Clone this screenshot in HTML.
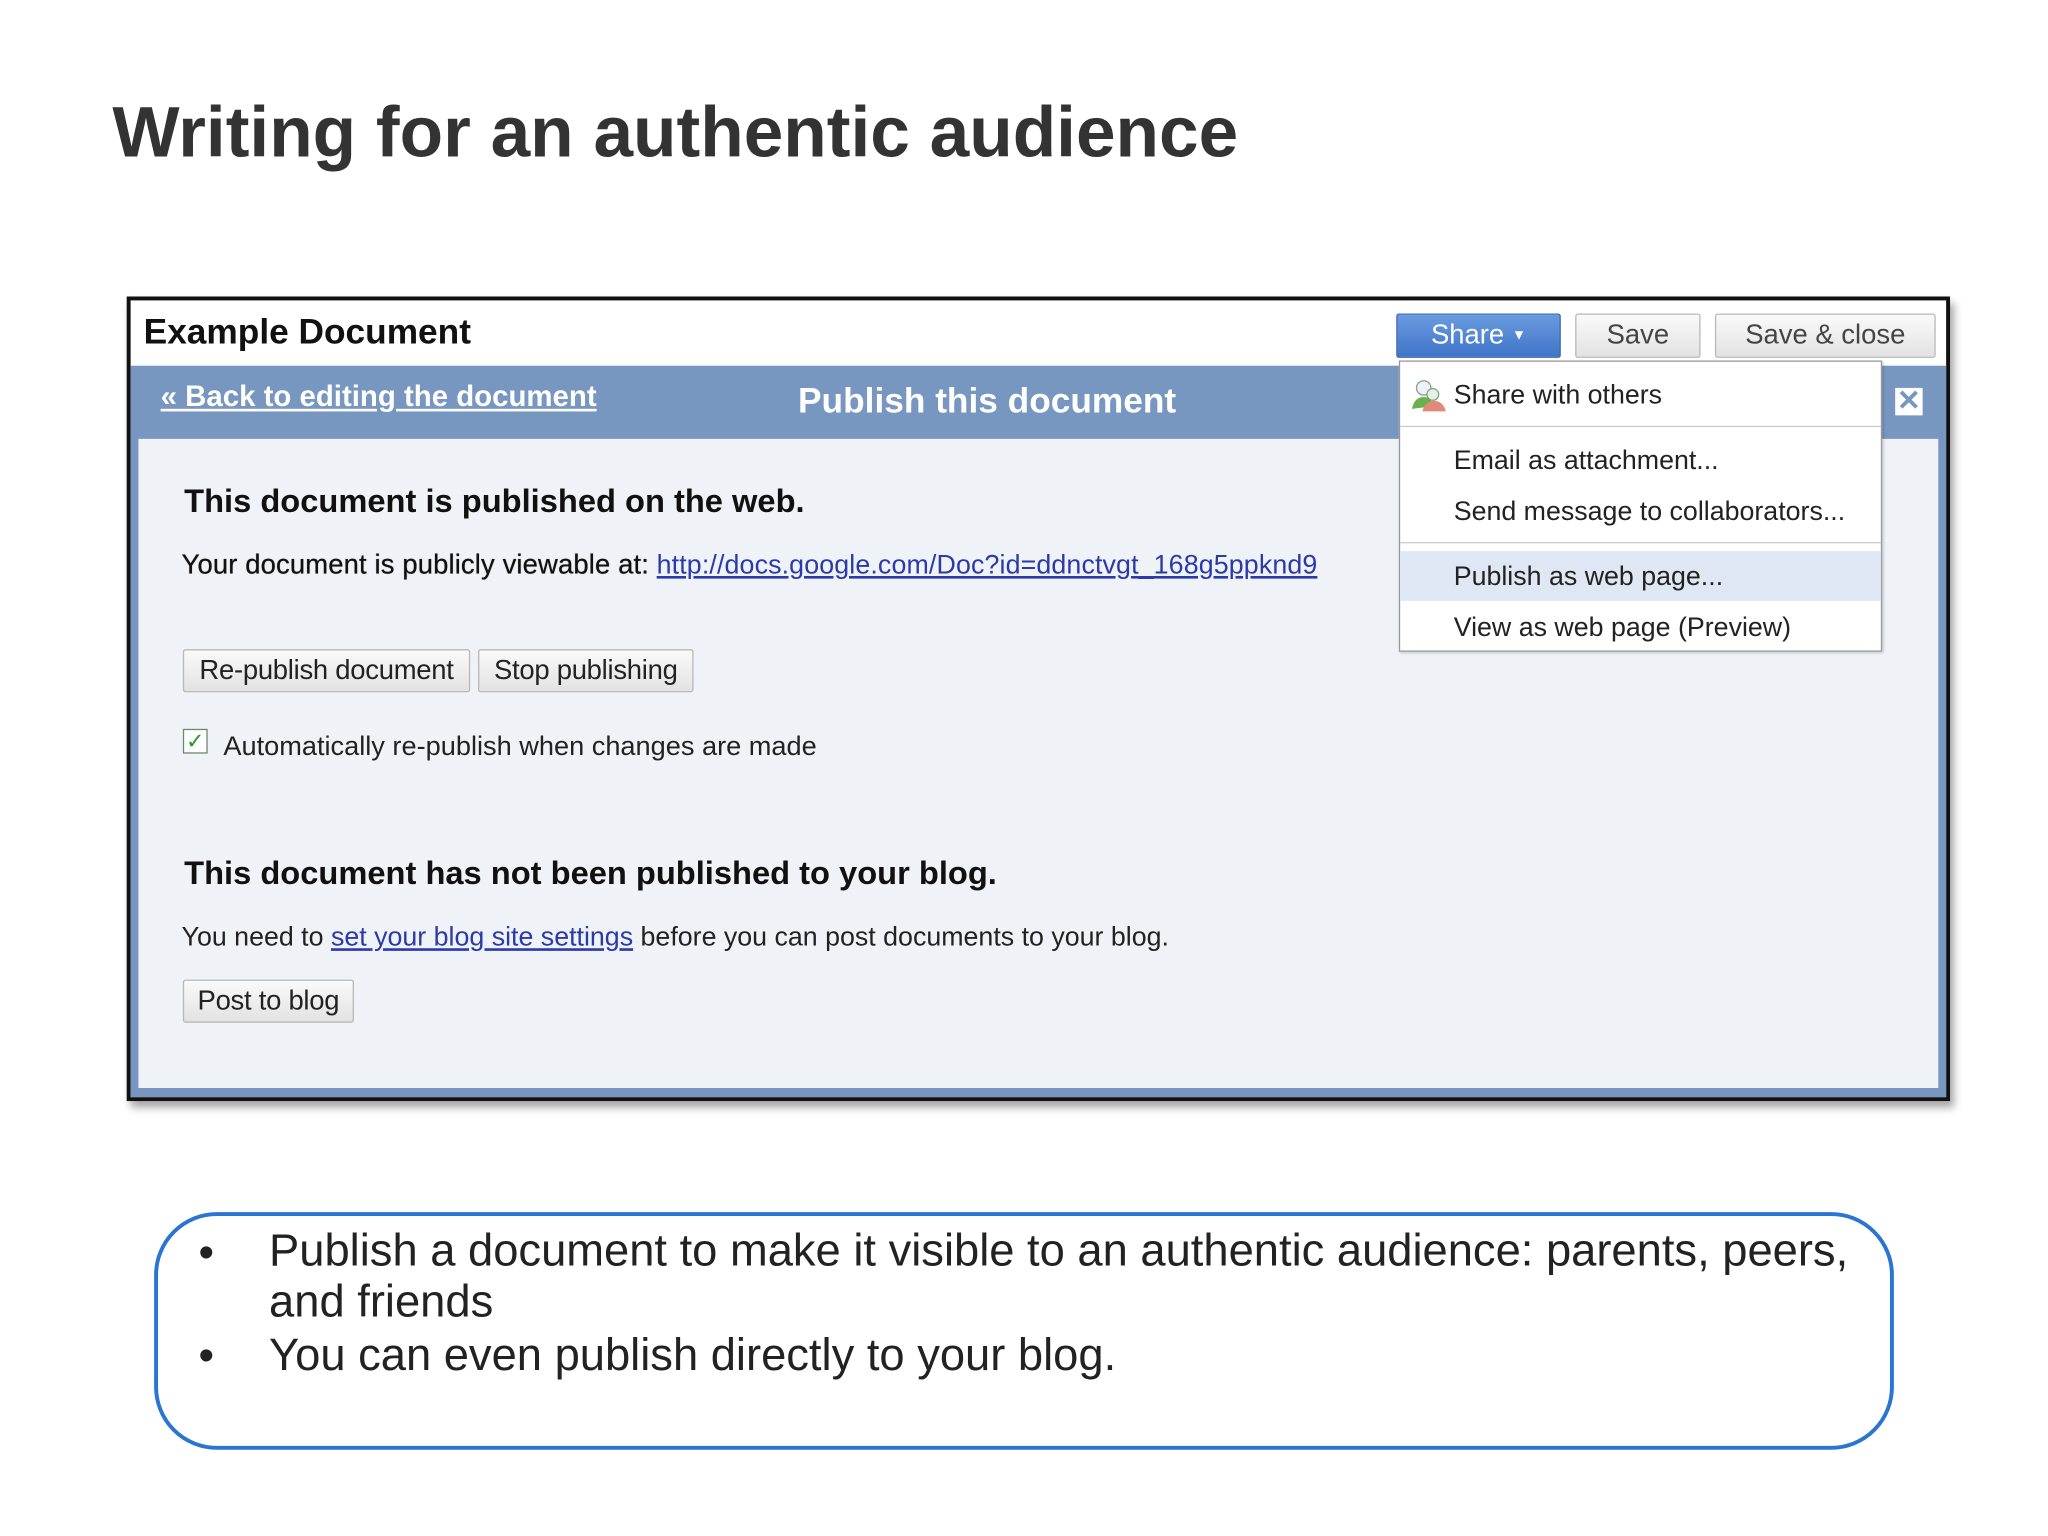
<!DOCTYPE html>
<html><head><meta charset="utf-8"><style>
html,body{margin:0;padding:0;background:#fff;width:2048px;height:1536px;overflow:hidden}
#s{position:absolute;left:0;top:0;width:1568px;height:1176px;transform:scale(1.306122);transform-origin:0 0;font-family:"Liberation Sans",Arial,sans-serif}
.a{position:absolute;white-space:nowrap}
.btn{position:absolute;border:1px solid #b8b8b8;background:linear-gradient(#fafafa,#e2e2e2);color:#222;font-size:21px;text-align:center;box-sizing:border-box;letter-spacing:-0.2px;border-radius:2px;white-space:nowrap}
.mi{position:absolute;left:41px;font-size:20.5px;color:#222;white-space:nowrap}
</style></head><body><div id="s">
<div class="a" style="left:86px;top:70px;font-size:54.5px;font-weight:bold;color:#333">Writing for an authentic audience</div>

<div style="position:absolute;left:97px;top:227px;width:1396px;height:616px;box-sizing:border-box;border:3px solid #111;background:#fff;box-shadow:3px 5px 6px rgba(0,0,0,.35)">
  <div class="a" style="left:10px;top:9px;font-size:27px;font-weight:bold;color:#111">Example Document</div>
  <div style="position:absolute;left:0;top:50px;width:1390px;height:560px;background:#7897c0"></div>
  <div style="position:absolute;left:6px;top:106px;width:1378px;height:497px;background:#eff2f7"></div>
  <div class="a" style="left:23px;top:61px;font-size:22.5px;font-weight:bold;color:#fff;text-decoration:underline">« Back to editing the document</div>
  <div class="a" style="left:511px;top:62px;font-size:27px;font-weight:bold;color:#fff">Publish this document</div>
  <div style="position:absolute;left:1351px;top:67px;width:21px;height:21px;background:#fff;color:#7897c0;font-size:22px;line-height:20px;text-align:center;font-weight:bold">✕</div>

  <div class="a" style="left:41px;top:140px;font-size:25px;font-weight:bold;color:#111">This document is published on the web.</div>
  <div class="a" style="left:39px;top:191px;font-size:21px;color:#111"><span style="letter-spacing:0.1px;text-shadow:0 0 .5px #111">Your document is publicly viewable at:</span> <span style="color:#2a3aa8;text-decoration:underline;font-size:20.5px;letter-spacing:0.1px">http://docs.google.com/Doc?id=ddnctvgt_168g5ppknd9</span></div>
  <div class="btn" style="left:40px;top:267px;width:220px;height:33px;line-height:31px">Re-publish document</div>
  <div class="btn" style="left:266px;top:267px;width:165px;height:33px;line-height:31px">Stop publishing</div>
  <div style="position:absolute;left:40px;top:328px;width:19px;height:19px;box-sizing:border-box;border:1px solid #6a8a6a;background:#fff;color:#2a9a2a;font-size:17px;line-height:17px;text-align:center">✓</div>
  <div class="a" style="left:71px;top:330px;font-size:20.8px;color:#222">Automatically re-publish when changes are made</div>

  <div class="a" style="left:41px;top:425px;font-size:25px;font-weight:bold;color:#111">This document has not been published to your blog.</div>
  <div class="a" style="left:39px;top:476px;font-size:20.5px;color:#222">You need to <span style="color:#2a3aa8;text-decoration:underline">set your blog site settings</span> before you can post documents to your blog.</div>
  <div class="btn" style="left:40px;top:520px;width:131px;height:33px;line-height:31px">Post to blog</div>

  <div style="position:absolute;left:969px;top:10px;width:126px;height:34px;background:linear-gradient(#6a9be0,#3f74c8);border:1px solid #3a68b0;box-sizing:border-box;border-radius:2px;color:#fff;font-size:21px;line-height:32px;text-align:center">Share <span style="font-size:11px;vertical-align:3px">▼</span></div>
  <div class="btn" style="left:1106px;top:10px;width:96px;height:34px;line-height:32px;color:#444;letter-spacing:0">Save</div>
  <div class="btn" style="left:1213px;top:10px;width:169px;height:34px;line-height:32px;color:#444;letter-spacing:0">Save &amp; close</div>

  <div style="position:absolute;left:971px;top:46px;width:370px;height:223px;background:#fff;border:1px solid #999;box-sizing:border-box;box-shadow:1px 1px 2px rgba(0,0,0,.2)">
    <svg style="position:absolute;left:8px;top:12px" width="28" height="28" viewBox="0 0 28 28"><circle cx="10" cy="8" r="5.5" fill="#eef2f4" stroke="#8a9aa0" stroke-width="1"/><circle cx="17" cy="13" r="4.5" fill="#e6f2e6" stroke="#8aa08a"/><path d="M1 24 Q3 15 10 15 Q16 15 17 22 Z" fill="#6ab04c"/><path d="M9 26 Q11 18 18 18 Q25 18 27 26 Z" fill="#e08a7a"/></svg>
    <div class="mi" style="top:14px">Share with others</div>
    <div style="position:absolute;left:0;top:49px;width:368px;border-top:1px solid #ccc"></div>
    <div class="mi" style="top:64px">Email as attachment...</div>
    <div class="mi" style="top:103px">Send message to collaborators...</div>
    <div style="position:absolute;left:0;top:138px;width:368px;border-top:1px solid #ccc"></div>
    <div style="position:absolute;left:0;top:145px;width:368px;height:38px;background:#dfe7f4"></div>
    <div class="mi" style="top:153px">Publish as web page...</div>
    <div class="mi" style="top:192px">View as web page (Preview)</div>
  </div>
</div>

<div style="position:absolute;left:118px;top:928px;width:1332px;height:182px;box-sizing:border-box;border:3px solid #2a74d4;border-radius:48px"></div>
<div class="a" style="left:152px;top:940px;font-size:34px;color:#222">•</div>
<div class="a" style="left:206px;top:939px;font-size:34.7px;color:#222;line-height:39px">Publish a document to make it visible to an authentic audience: parents, peers,<br>and friends</div>
<div class="a" style="left:152px;top:1019px;font-size:34px;color:#222">•</div>
<div class="a" style="left:206px;top:1019px;font-size:34.7px;color:#222">You can even publish directly to your blog.</div>
</div></body></html>
